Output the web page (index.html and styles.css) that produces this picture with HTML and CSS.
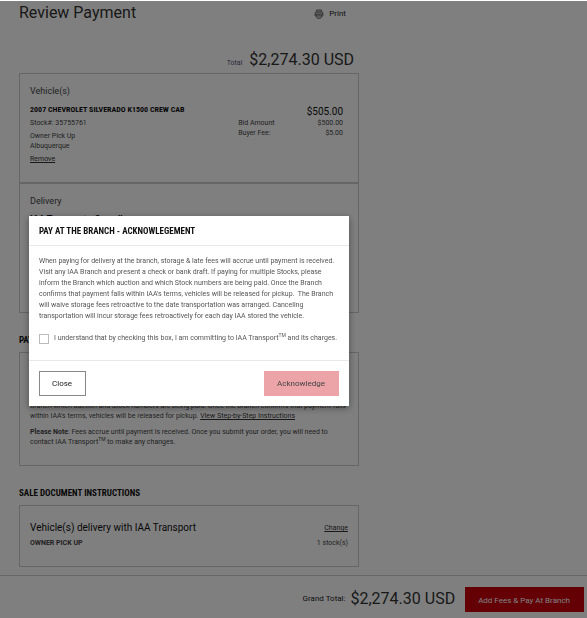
FILE: index.html
```html
<!DOCTYPE html>
<html lang="en">
<head>
<meta charset="utf-8">
<meta name="viewport" content="width=device-width, initial-scale=1">
<title>Review Payment</title>
<link rel="stylesheet" href="styles.css">
</head>
<body>
<main class="page">
  <header class="page-head">
    <h1>Review Payment</h1>
    <button class="print" type="button">
      <svg viewBox="0 0 10 10" width="10" height="10" aria-hidden="true">
        <path d="M2.500 3V1h5v2" fill="#bbb" stroke="#777" stroke-width="1"/>
        <path d="M1.500 2.600h7L9.500 4v2.600L8 8H2L.5 6.600V4z" fill="#888"/>
        <path d="M2.500 6v2.500L4 9.500h2l1.500-1V6z" fill="#bbb" stroke="#777" stroke-width=".8"/>
        <path d="M2 4.200h6" stroke="#ccc" stroke-width=".9"/>
      </svg>
      Print
    </button>
  </header>
  <p class="total"><span class="total-label">Total</span><span class="amount">$2,274.30 USD</span></p>

  <section class="card vehicle">
    <h2 class="card-title">Vehicle(s)</h2>
    <div class="vehicle-body">
      <div>
        <h3 class="vehicle-name">2007 CHEVROLET SILVERADO K1500 CREW CAB</h3>
        <p class="stock">Stock#: 35755761</p>
        <p class="pickup">Owner Pick Up<br>Albuquerque</p>
        <a class="link" href="#remove">Remove</a>
      </div>
      <dl class="fees">
        <dt></dt><dd class="fee-total">$505.00</dd>
        <dt>Bid Amount</dt><dd>$500.00</dd>
        <dt>Buyer Fee:</dt><dd>$5.00</dd>
      </dl>
    </div>
  </section>
  <section class="card delivery">
    <h2 class="card-title">Delivery</h2>
    <h3 class="delivery-name">IAA Transport - Overall</h3>
  </section>

  <h2 class="section-title">PAYMENT METHOD</h2>
  <section class="card payment">
    <p>Visit any IAA Branch and present a check or bank draft. Please inform the<br>Branch which auction and Stock numbers are being paid. Once the Branch confirms that payment falls<br>within IAA's terms, vehicles will be released for pickup. <a class="link" href="#steps">View Step-by-Step Instructions</a></p>
    <p><strong>Please Note</strong>: Fees accrue until payment is received. Once you submit your order, you will need to contact IAA Transport<sup>TM</sup> to make any changes.</p>
  </section>

  <h2 class="section-title">SALE DOCUMENT INSTRUCTIONS</h2>
  <section class="card documents">
    <div class="row"><h3>Vehicle(s) delivery with IAA Transport</h3><a class="link" href="#change">Change</a></div>
    <div class="row"><strong>OWNER PICK UP</strong><span>1 stock(s)</span></div>
  </section>
</main>

<footer class="checkout">
  <span class="grand-label">Grand Total:</span>
  <span class="amount">$2,274.30 USD</span>
  <button class="pay" type="button">Add Fees &amp; Pay At Branch</button>
</footer>

<div class="backdrop"></div>
<div class="modal" role="dialog" aria-modal="true" aria-labelledby="modal-title">
  <h2 class="modal-title" id="modal-title">PAY AT THE BRANCH - ACKNOWLEGEMENT</h2>
  <div class="modal-body">
    <p>When paying for delivery at the branch, storage &amp; late fees will accrue until payment is received.<br>Visit any IAA Branch and present a check or bank draft. If paying for multiple Stocks, please<br>inform the Branch which auction and which Stock numbers are being paid. Once the Branch<br>confirms that payment falls within IAA's terms, vehicles will be released for pickup.&nbsp; The Branch<br>will waive storage fees retroactive to the date transportation was arranged. Canceling<br>transportation will incur storage fees retroactively for each day IAA stored the vehicle.</p>
    <label class="agree"><input type="checkbox"><span>I understand that by checking this box, I am committing to IAA Transport<sup>TM</sup> and its charges.</span></label>
  </div>
  <div class="modal-actions">
    <button class="close" type="button">Close</button>
    <button class="ack" type="button">Acknowledge</button>
  </div>
</div>
</body>
</html>
```
FILE: styles.css
```css
* {
  box-sizing: border-box;
}

body,
h1,
h2,
h3,
p,
dl,
dd {
  margin: 0;
}

body {
  display: flex;
  flex-direction: column;
  min-height: 100vh;
  background: #fff;
  color: #444;
  font: 7px/10px Roboto, "Liberation Sans", sans-serif;
}

button {
  padding: 0;
  border: 0;
  border-radius: 0;
  background: none;
  color: #222;
  font: inherit;
  font-size: 8px;
}

sup {
  font-size: 5px;
  line-height: 0;
}

.page {
  max-width: 359px;
  padding-left: 19px;
}

.page-head {
  display: flex;
  justify-content: space-between;
  align-items: center;
  height: 26px;
  padding-right: 13px;
}

h1 {
  color: #333;
  font-size: 16px;
  font-weight: 400;
  line-height: 24px;
}

.print {
  display: flex;
  align-items: center;
  gap: 5px;
  padding-top: 2px;
}

.total {
  display: flex;
  justify-content: flex-end;
  align-items: baseline;
  gap: 7px;
  padding: 24px 5px 3px 0;
}

.total-label {
  color: #557;
}

.amount {
  color: #333;
  font-size: 16px;
  font-weight: 400;
  line-height: 20px;
}

.card {
  padding: 10px;
  border: 1px solid #ccc;
}

.card-title {
  color: #444;
  font-size: 9px;
  font-weight: 400;
  line-height: 14px;
}

.vehicle {
  height: 110px;
}

.vehicle-body {
  display: flex;
  justify-content: space-between;
  padding: 6px 5px 0 0;
}

.vehicle-name,
.section-title,
.modal-title {
  color: #111;
  font-family: "Roboto Condensed", "Liberation Sans Narrow", Roboto, sans-serif;
  font-weight: 700;
}

.vehicle-name {
  font-size: 8px;
  line-height: 12px;
}

.stock {
  padding-top: 2px;
}

.pickup {
  padding: 3px 0;
}

.link {
  color: #333;
  text-decoration: underline;
  text-underline-offset: 1px;
}

.fees {
  display: grid;
  grid-template-columns: auto auto;
  column-gap: 32px;
  align-content: start;
  padding-top: 1px;
}

.fees dd {
  text-align: right;
}

.fees .fee-total {
  color: #111;
  font-size: 10px;
  line-height: 13px;
}

.delivery {
  height: 130px;
}

.delivery-name {
  padding-top: 4px;
  color: #111;
  font-size: 9px;
  line-height: 14px;
}

.section-title {
  padding: 20px 0 5px;
  font-size: 9px;
  line-height: 14px;
}

.payment {
  height: 114px;
  padding-top: 38px;
}

.payment p + p {
  padding-top: 6px;
}

.documents {
  height: 62px;
  padding-top: 15px;
}

.row {
  display: flex;
  justify-content: space-between;
  align-items: center;
}

.row + .row {
  padding-top: 3px;
}

.row h3 {
  color: #111;
  font-size: 10px;
  font-weight: 400;
  line-height: 14px;
}

.checkout {
  display: flex;
  justify-content: flex-end;
  align-items: center;
  height: 43px;
  margin-top: auto;
  padding: 4px 3px 0 0;
  border-top: 1px solid #ccc;
}

.grand-label {
  padding-right: 5px;
  color: #222;
  font-size: 8px;
}

.pay {
  height: 25px;
  margin-left: 10px;
  padding: 4px 14px 0 13px;
  background: #c8000a;
  color: #fff;
}

.backdrop {
  position: fixed;
  inset: 1px 0 0;
  background: rgba(0, 0, 0, 0.5);
}

.modal {
  position: fixed;
  top: 216px;
  left: 29px;
  width: 320px;
  background: #fff;
  box-shadow: 0 2px 7px rgba(0, 0, 0, 0.4);
}

.modal-title {
  padding: 8px 10px 7px;
  border-bottom: 1px solid #e8e8e8;
  font-size: 9px;
  line-height: 14px;
}

.modal-body {
  padding: 10px 10px 16px;
  color: #555;
  line-height: 11px;
  white-space: nowrap;
}

.agree {
  display: flex;
  align-items: center;
  gap: 5px;
  padding-top: 11px;
}

.agree input {
  appearance: none;
  width: 10px;
  height: 10px;
  margin: 0;
  border: 1px solid #bbb;
  background: #fff;
}

.modal-actions {
  display: flex;
  justify-content: space-between;
  padding: 10px;
  border-top: 1px solid #e8e8e8;
}

.close {
  height: 25px;
  padding: 0 13px 0 12px;
  border: 1px solid #888;
}

.ack {
  height: 25px;
  padding: 0 14px 0 13px;
  background: #eca4a8;
  color: #444;
}
```
